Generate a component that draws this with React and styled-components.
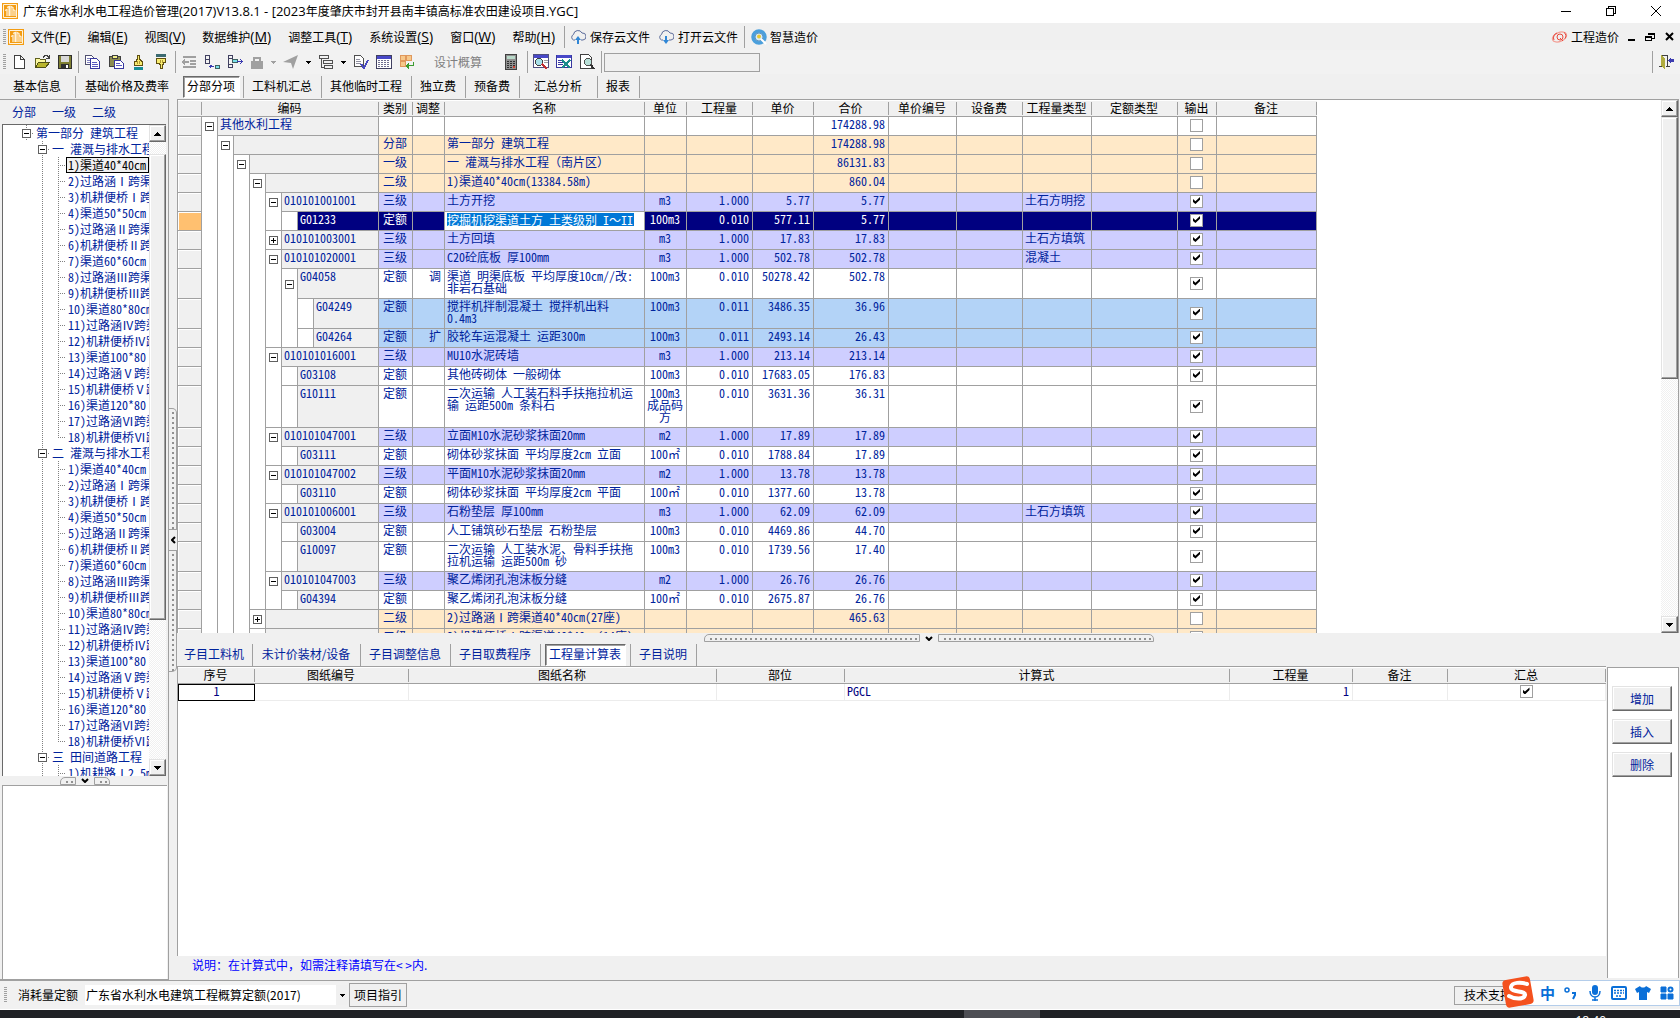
import React from "react";
import styled, { createGlobalStyle, css } from "styled-components";

const INK = "#00239c";
const LINE = "#a0a0a0";
const FACE = "#f0f0f0";
const UI = `"Noto Sans CJK SC", sans-serif`;
const MONO = `"Noto Sans Mono CJK SC", "Liberation Mono", "Noto Sans CJK SC", monospace`;

const Global = createGlobalStyle`
  * { box-sizing: border-box; }
  html, body { margin: 0; height: 100%; overflow: hidden; }
  body { font: 12px/16px ${UI}; color: #000; background: ${FACE}; }
  button, input, select { font: inherit; color: inherit; margin: 0; padding: 0; border-radius: 0; }
`;

const Window = styled.div`
  display: flex;
  flex-direction: column;
  height: 100vh;
  background: ${FACE};
  white-space: nowrap;
`;
const Latin = styled.span`
  font-family: "Open Sans", sans-serif;
  font-size: ${(p) => p.$size || 13}px;
  line-height: 12px;
`;
const Plain = styled.button`
  display: flex;
  align-items: center;
  gap: ${(p) => p.$gap || 0}px;
  flex: none;
  border: 0;
  background: none;
`;
const Spacer = styled.div`
  flex: 1;
`;

/* ---------- title bar ---------- */
const TitleBar = styled.header`
  display: flex;
  align-items: center;
  gap: 5px;
  height: 23px;
  flex: none;
  padding: 0 16px 2px 2px;
  background: #fff;
`;
const TitleText = styled.h1`
  margin: 0;
  font-size: 12px;
  font-weight: 400;
  line-height: 16px;
`;
const Captions = styled.div`
  display: flex;
  gap: 29px;
  margin-left: auto;
`;

/* ---------- menu and tool bars ---------- */
const MenuBar = styled.nav`
  display: flex;
  align-items: center;
  height: 27px;
  flex: none;
  padding: 0 6px 0 3px;
`;
const Menus = styled.div`
  display: flex;
  gap: 17px;
  padding: 0 9px 0 7px;
`;
const Grip = styled.div`
  width: 3px;
  height: 16px;
  margin-right: ${(p) => p.$after || 0}px;
  background: repeating-linear-gradient(#a0a0a0 0 1px, transparent 1px 2px);
`;
const Rule = styled.div`
  width: 1px;
  height: 22px;
  margin: 0 ${(p) => p.$right}px 0 ${(p) => p.$left}px;
  background: ${LINE};
`;
const ToolBar = styled.div`
  display: flex;
  align-items: center;
  height: 24px;
  flex: none;
  padding: 0 5px 0 3px;
  background: #f2f2f2;
`;
const Tools = styled.div`
  display: flex;
  align-items: center;
  gap: ${(p) => p.$gap}px;
  margin-left: ${(p) => p.$left || 0}px;
`;
const Mode = styled.span`
  margin: 0 23px 0 19px;
  color: #808080;
`;
const Search = styled.input`
  width: 156px;
  height: 19px;
  border: 1px solid ${LINE};
  background: ${FACE};
`;

/* ---------- tabs ---------- */
const TabBar = styled.div`
  display: flex;
  align-items: center;
  height: ${(p) => p.$height}px;
  flex: none;
  color: ${(p) => p.$color || "#000"};
`;
const TabSlot = styled.div`
  display: flex;
  justify-content: center;
  align-items: center;
  width: ${(p) => p.$width}px;
  height: 22px;
  flex: none;
  border-right: 1px solid ${(p) => (p.$bare ? "transparent" : LINE)};
`;
const Tab = styled.button`
  height: 22px;
  padding: 0 4px 2px 3px;
  border: 1px solid transparent;
  background: none;
  ${(p) =>
    p.$active &&
    css`
      border-color: #696969 #fff #fff #696969;
      box-shadow: inset 1px 1px 0 ${LINE};
      background: #fff;
    `}
`;

/* ---------- body ---------- */
const Body = styled.main`
  display: flex;
  flex: 1;
  min-height: 0;
`;
const Side = styled.aside`
  display: flex;
  flex-direction: column;
  flex: none;
  width: 169px;
  padding-left: 2px;
  border: solid ${LINE};
  border-width: 1px 1px 1px 0;
`;
const Levels = styled.div`
  display: flex;
  align-items: center;
  gap: 16px;
  height: 24px;
  flex: none;
  padding-left: 10px;
  color: ${INK};
`;
const TreeBox = styled.div`
  display: flex;
  flex: 653 1 0;
  min-height: 0;
  margin-right: 2px;
  border: solid #696969;
  border-width: 1px 0 0 1px;
  background: #fff;
`;
const Tree = styled.ul`
  flex: 1;
  min-width: 0;
  margin: 0;
  padding: 0 0 0 15px;
  overflow: hidden;
  list-style: none;
  font-family: ${MONO};
  color: ${INK};
`;
const TreeRow = styled.li`
  display: flex;
  height: 16px;
`;
const Guide = styled.span`
  display: flex;
  justify-content: center;
  align-items: center;
  width: 16px;
  flex: none;
  background-repeat: no-repeat;
  background-image: repeating-linear-gradient(${(p) => (p.$down ? "#808080" : "transparent")} 0 1px, transparent 1px 2px),
    repeating-linear-gradient(90deg, ${(p) => (p.$across ? "#808080" : "transparent")} 0 1px, transparent 1px 2px);
  background-size: 1px ${(p) => (p.$end ? "8px" : "100%")}, 9px 1px;
  background-position: 8px 0, 8px 8px;
`;
const TreeLabel = styled.span`
  padding-left: 2px;
  line-height: 15px;
  height: 16px;
  ${(p) =>
    p.$active &&
    css`
      flex: 1;
      border: 1px solid #000;
      padding-left: 1px;
      line-height: 13px;
      background: ${FACE};
      color: #000;
    `}
`;
const Notes = styled.div`
  flex: 193 1 0;
  margin-right: 1px;
  border: solid ${LINE};
  border-width: 1px 0 0 1px;
  background: #fff;
`;
const Toggle = styled.button`
  display: flex;
  align-items: center;
  justify-content: center;
  flex: none;
  width: 9px;
  height: 9px;
  border: 1px solid #606060;
  background: #fff;
`;

/* ---------- scroll bar ---------- */
const Scroll = styled.div`
  display: flex;
  flex-direction: column;
  flex: none;
  width: 17px;
  background: repeating-conic-gradient(#f0f0f0 0 25%, #fff 0 50%) 0 0 / 2px 2px;
`;
const Bevel = styled.button`
  display: flex;
  align-items: center;
  justify-content: center;
  border: 1px solid;
  border-color: #e3e3e3 #696969 #696969 #e3e3e3;
  box-shadow: inset -1px -1px 0 ${LINE}, inset 1px 1px 0 #fff;
  background: ${FACE};
`;
const Arrow = styled(Bevel)`
  height: 17px;
  flex: none;
`;
const Thumb = styled(Bevel)`
  flex: ${(p) => p.$size} 1 0;
`;
const Track = styled.div`
  flex: ${(p) => p.$size} 1 0;
`;

/* ---------- splitters ---------- */
const VSplit = styled.div`
  display: flex;
  flex-direction: column;
  justify-content: center;
  flex: none;
  width: 8px;
`;
const HSplit = styled.div`
  display: flex;
  justify-content: center;
  align-items: center;
  flex: none;
  height: ${(p) => p.$height}px;
`;
const GripV = styled.div`
  height: 122px;
  border: 1px solid ${LINE};
  border-left: 0;
  border-radius: ${(p) => (p.$first ? "0 5px 0 0" : "0 0 5px 0")};
  background: repeating-linear-gradient(transparent 0 3px, #909090 3px 5px) 3px 0 / 2px 100% no-repeat;
`;
const GripH = styled.div`
  width: ${(p) => p.$width}px;
  height: 8px;
  border: 1px solid ${LINE};
  border-radius: ${(p) => (p.$first ? "5px 0 0 0" : "0 5px 0 0")};
  background: repeating-linear-gradient(90deg, transparent 0 3px, #909090 3px 5px) 2px 3px / calc(100% - 4px) 2px no-repeat;
`;
const Fold = styled(Plain)`
  justify-content: center;
  width: ${(p) => p.$w}px;
  height: ${(p) => p.$h}px;
`;

/* ---------- tables ---------- */
const Work = styled.section`
  display: flex;
  flex-direction: column;
  flex: 1;
  min-width: 0;
`;
const Pane = styled.div`
  display: flex;
  flex: ${(p) => p.$size} 1 0;
  min-height: 0;
  border: solid ${LINE};
  border-width: 1px 0 0 1px;
  background: #fff;
`;
const GridPane = styled(Pane)`
  border-right-width: 1px;
  margin-right: 1px;
`;
const Sheet = styled.div`
  flex: 1;
  overflow: hidden;
`;
const Table = styled.table`
  width: ${(p) => p.$width};
  table-layout: fixed;
  border-spacing: 0;
  font-family: ${MONO};
  line-height: 12px;
  color: ${INK};
`;
const Th = styled.th`
  height: 17px;
  padding: 0 2px 0 0;
  border-bottom: 1px solid ${LINE};
  background: linear-gradient(${LINE}, ${LINE}) 100% 50% / 1px 13px no-repeat, ${FACE};
  box-shadow: inset 0 1px 0 #fff;
  font-weight: 400;
  font-family: ${UI};
  color: #000;
`;
const Td = styled.td`
  padding: 1px 3px 1px 2px;
  border: solid ${LINE};
  border-width: 0 1px 1px 0;
  vertical-align: top;
  text-align: ${(p) => p.$align || "left"};
  white-space: normal;
`;
const TickCell = styled(Td)`
  padding: 0 1px 1px 0;
  border-color: ${(p) => (p.$faint ? "#ececec" : LINE)};
  vertical-align: middle;
`;
const GutterCell = styled(Td)`
  background: ${(p) => (p.$on ? "#ffc070" : FACE)};
  box-shadow: inset 1px 1px 0 #fff;
`;
const CodeCell = styled(Td)`
  padding: 0;
  border-bottom: 0;
`;
const tints = { top: "#fff", part: "#ffe9c8", item: "#ceceff", norm: "#fff", sub: "#b3d3f7", pick: "#000080" };
const Tr = styled.tr`
  height: ${(p) => p.$height}px;
  background: ${(p) => tints[p.$kind]};
  color: ${(p) => (p.$kind === "pick" ? "#fff" : "inherit")};
`;
const CodeLine = styled.div`
  display: flex;
  height: ${(p) => p.$height}px;
`;
const Step = styled.div`
  display: flex;
  align-items: center;
  justify-content: center;
  flex: none;
  width: 16px;
  border-right: 1px solid ${LINE};
  border-bottom: ${(p) => (p.$closed ? `1px solid ${LINE}` : "0")};
  background: #fff;
  color: #000;
`;
const Code = styled.div`
  flex: 1;
  padding: 1px 0 0 2px;
  border-bottom: 1px solid ${LINE};
  background: ${(p) => (p.$pick ? "#000080" : FACE)};
`;
const Check = styled.input.attrs({ type: "checkbox" })`
  appearance: none;
  display: block;
  width: 13px;
  height: 13px;
  margin: 0 auto;
  border: 1px solid ${LINE};
  background: #fff;
  &:checked::before {
    content: "";
    display: block;
    width: 7px;
    height: 7px;
    margin: 1px 2px;
    background: #000;
    clip-path: polygon(0 30%, 35% 60%, 100% 0, 100% 38%, 35% 100%, 0 70%);
  }
`;
const NameInput = styled.input`
  display: block;
  width: 187px;
  height: 13px;
  border: 0;
  background: #0078d7;
  color: #fff;
  line-height: 12px;
`;
const NameCell = styled(Td)`
  background: ${(p) => (p.$edit ? "#fff" : "transparent")};
`;

const Lower = styled.div`
  display: flex;
  flex: 314 1 0;
  min-height: 0;
`;
const Calc = styled.div`
  display: flex;
  flex-direction: column;
  flex: 1;
  min-width: 0;
`;
const CalcTd = styled(Td)`
  height: 17px;
  border-color: #ececec;
  color: #000080;
`;
const CalcIndex = styled(CalcTd)`
  padding: 0;
  border: 1px solid #000;
`;
const Hint = styled.p`
  height: 24px;
  margin: 0;
  padding: 1px 15px;
  color: #0000ff;
`;
const Actions = styled.div`
  display: flex;
  flex-direction: column;
  gap: 8px;
  flex: none;
  width: 72px;
  margin: 1px 1px 2px 1px;
  padding: 18px 6px 0 4px;
  border: solid ${LINE};
  border-width: 1px 1px 0 1px;
  background: #fff;
`;
const Action = styled(Bevel)`
  height: 25px;
  color: ${INK};
`;

/* ---------- status bar ---------- */
const Status = styled.footer`
  display: flex;
  align-items: center;
  position: relative;
  height: 30px;
  flex: none;
  padding: 0 0 0 4px;
  border-top: 1px solid ${LINE};
  border-bottom: 1px solid #fff;
  background: #f1f1f1;
`;
const Combo = styled.div`
  display: flex;
  align-items: center;
  width: 262px;
  height: 20px;
  margin: 0 2px 0 7px;
  padding-right: 2px;
  background: linear-gradient(${FACE}, ${FACE}) 100% 0 / 11px 100% no-repeat, #fff;
`;
const Select = styled.select`
  appearance: none;
  flex: 1;
  border: 0;
  padding-left: 1px;
  background: none;
  font-family: "Noto Sans CJK SC", sans-serif;
`;
const FlatButton = styled.button`
  height: ${(p) => p.$height}px;
  padding: 0 ${(p) => p.$pad}px;
  border: 1px solid ${LINE};
  background: ${FACE};
`;
const SupportButton = styled(FlatButton)`
  margin-right: 158px;
`;
const InputBar = styled.div`
  position: absolute;
  right: 0;
  bottom: 3px;
  display: flex;
  align-items: center;
  gap: 8px;
  width: 173px;
  height: 26px;
  padding: 0 4px 0 32px;
  border: 1px solid #b4cdea;
  background: #fff;
  color: #0a6fd8;
`;
const Badge = styled.span`
  position: absolute;
  left: -6px;
  top: -5px;
`;
const InputMode = styled.span`
  font-size: 15px;
  font-weight: 700;
`;
const TaskBar = styled.div`
  display: flex;
  justify-content: space-between;
  height: 8px;
  flex: none;
  padding: 0 4px 0 964px;
  overflow: hidden;
  background: #202226;
  color: #fff;
`;
const Running = styled.div`
  flex: none;
  width: 76px;
  background: #4d4e54;
`;
const Clock = styled.time`
  padding: 3px 70px 0 0;
  font: 12px/16px "Open Sans", sans-serif;
`;

/* ---------- drawings ---------- */
const Drawing = styled.svg`
  display: block;
  flex: none;
`;
const Svg = ({ w = 16, h = 16, box, smooth, children }) => (
  <Drawing
    width={w}
    height={h}
    viewBox={box || `0 0 ${w} ${h}`}
    fill="none"
    stroke="none"
    shapeRendering={smooth ? "auto" : "crispEdges"}
    aria-hidden="true"
  >
    {children}
  </Drawing>
);
const Logo = () => (
  <Svg smooth>
    <rect width="16" height="16" fill="#f39c12" />
    <path d="M1.500 1.500h13v13h-13z" stroke="#fff3dc" />
    <path d="M3 7.500l2-1V13M5 4.500l2-1V13M9 13V3.500l2 1V13M11 6.500l2 1V13M7.500 3v10" stroke="#fff3dc" strokeWidth="1.200" />
  </Svg>
);
const Caret = ({ color = "#000", up }) => (
  <Svg w={7} h={4}>
    <path d={up ? "M0 4h7L3.500 0z" : "M0 0h7L3.500 4z"} fill={color} />
  </Svg>
);
const SmallCaret = ({ color = "#000" }) => (
  <Svg w={5} h={3}>
    <path d="M0 0h5L2.500 3z" fill={color} />
  </Svg>
);
const Chevron = ({ left }) =>
  left ? (
    <Svg w={5} h={8} smooth>
      <path d="M4 1L1 4l3 3" stroke="#000" strokeWidth="2" />
    </Svg>
  ) : (
    <Svg w={8} h={5} smooth>
      <path d="M1 1l3 3 3-3" stroke="#000" strokeWidth="2" />
    </Svg>
  );
const Sign = ({ plus }) => (
  <Svg w={5} h={5}>
    <path d={plus ? "M0 2h5v1H0zM2 0h1v5H2z" : "M0 2h5v1H0z"} fill="#000" />
  </Svg>
);
const Cloud = ({ down }) => (
  <Svg smooth>
    <path d="M5 11H3.500a3 3 0 010-5.500 4.500 4.500 0 018.500-1.500 3.500 3.500 0 011 7H11" stroke="#5b6b9a" />
    <path d={down ? "M7 7h2v4h2l-3 4-3-4h2z" : "M7 15h2v-4h2L8 7l-3 4h2z"} fill="#2f86d6" />
  </Svg>
);
const Wise = () => (
  <Svg smooth>
    <circle cx="8" cy="8" r="6" stroke="#4a9fdc" strokeWidth="3.500" />
    <circle cx="8" cy="8" r="4" fill="#d8ecf8" stroke="#2c6ea8" strokeWidth=".700" />
    <circle cx="8" cy="7.500" r="2" fill="#e8c832" />
    <path d="M10 10l5 5" stroke="#fff" strokeWidth="2" />
  </Svg>
);
const Swirl = () => (
  <Svg w={17} smooth>
    <ellipse cx="8.500" cy="8" rx="7.500" ry="4.500" transform="rotate(-22 8.500 8)" stroke="#f2a097" strokeWidth="1.200" />
    <circle cx="9" cy="8" r="3" stroke="#e8483c" />
    <path d="M9 9l3 3M6 4a5 5 0 00-3 7M13 3.500a4 4 0 011 6" stroke="#e8483c" />
  </Svg>
);

const I = {
  fresh: (
    <Svg>
      <path d="M3.500 1.500h6l4 4v9h-10zM9.500 1.500v4h4" fill="#fff" stroke="#404040" />
    </Svg>
  ),
  open: (
    <Svg>
      <path d="M1.500 13.500v-9h4l1 1h5v3" fill="#fbf8a0" stroke="#606020" />
      <path d="M1.500 13.500l3-5h11l-4 5z" fill="#b9b52c" stroke="#505018" />
      <path d="M9 3.500l2-2h2l2 2M15 1v3h-3" stroke="#404040" />
    </Svg>
  ),
  save: (
    <Svg>
      <path d="M1.500 1.500h13v13h-13z" fill="#808032" stroke="#303030" />
      <path d="M4 2h8v6H4z" fill="#d8d8d8" />
      <path d="M4 10h8v4H4z" fill="#303030" />
      <path d="M9 11h2v3H9z" fill="#fff" />
    </Svg>
  ),
  copy: (
    <Svg>
      <path d="M1.500 1.500h6l2 2v7h-8z" fill="#fff" stroke="#505070" />
      <path d="M3 4h4M3 6h4M3 8h4" stroke="#8080c0" />
      <path d="M6.500 4.500h6l3 3v7h-9z" fill="#fff" stroke="#3838a0" />
      <path d="M8 8.500h5M8 10.500h6M8 12.500h6" stroke="#5858c0" />
    </Svg>
  ),
  paste: (
    <Svg>
      <path d="M1.500 2.500h11v10h-11z" fill="#8c8c50" stroke="#404040" />
      <path d="M4.500 1.500h5v3h-5z" fill="#f4f08c" stroke="#404040" />
      <path d="M6.500 6.500h6l3 3v5h-9z" fill="#fff" stroke="#3838a0" />
      <path d="M8 9.500h4M8 11.500h6" stroke="#5858c0" />
    </Svg>
  ),
  handUp: (
    <Svg w={12} box="2 0 12 16">
      <path d="M7.500 1.500h2v4h1v1h1v1h1v4h-8v-4h2v-2h1z" fill="#f8ec70" stroke="#605010" />
      <path d="M7.500 7v3M9.500 7v3" stroke="#b09830" />
      <path d="M4 13h9v3H4z" fill="#158c94" />
    </Svg>
  ),
  handDown: (
    <Svg w={12} box="2 0 12 16">
      <path d="M3 0h10v3H3z" fill="#3c6a70" />
      <path d="M3.500 4.500h9v4h-2v2h-1v4h-2v-4h-1v-1h-3z" fill="#f8ec70" stroke="#605010" />
      <path d="M7.500 6v3M9.500 6v3" stroke="#b09830" />
    </Svg>
  ),
  outdent: (
    <Svg>
      <path d="M2 2h13v2H2zM9 6h6v2H9zM9 9h6v2H9zM2 12h13v2H2zM0 8l4-3v2h4v2H4v2z" fill="#a0a0a0" />
    </Svg>
  ),
  addChild: (
    <Svg>
      <path d="M1.500 1.500h4v4h-4zM1.500 5.500h4v4h-4zM1.500 9.500h4" stroke="#404060" />
      <path d="M6 12.500h4M7.500 11l-2 1.500 2 2" stroke="#3838b0" />
      <path d="M11.500 11.500h4v3h-4z" fill="#78e0e8" stroke="#406060" />
    </Svg>
  ),
  addSame: (
    <Svg>
      <path d="M1.500 1.500h4v3h-4zM1.500 10.500h4v3h-4zM1.500 4v7" stroke="#404060" />
      <path d="M5.500 5.500h5v3h-5z" fill="#78e0e8" stroke="#406060" />
      <path d="M10 7.500h5M13 5l2 2.500-2 2.500" stroke="#3838b0" />
    </Svg>
  ),
  lock: (
    <Svg w={14}>
      <path d="M1 7h12v8H1z" fill="#a0a0a0" />
      <path d="M4 7V3.500h6V7" stroke="#a0a0a0" strokeWidth="2" />
    </Svg>
  ),
  send: (
    <Svg smooth>
      <path d="M0 8L15 1l-5 14-2-6z" fill="#a0a0a0" />
    </Svg>
  ),
  outline: (
    <Svg>
      <path d="M1.500 1.500h9v3h-9zM3.500 5v8h3M5.500 6.500h9v3h-9zM6.500 11.500h8v3h-8z" stroke="#505050" />
    </Svg>
  ),
  verify: (
    <Svg>
      <path d="M1.500 1.500h6l3 3v8h-9z" fill="#fff" stroke="#505050" />
      <path d="M3 5h4M3 7h5M3 9h5" stroke="#9090a0" />
      <path d="M8 10l3 4 4-8" stroke="#4848c0" strokeWidth="2" />
    </Svg>
  ),
  sheet: (
    <Svg>
      <path d="M.500 1.500h15v13H.500z" fill="#fff" stroke="#404060" />
      <path d="M1 2h14v3H1z" fill="#4848c8" />
      <path d="M2 6.500h12M2 8.500h12M2 10.500h12M2 12.500h12" stroke="#707090" strokeDasharray="2 1" />
    </Svg>
  ),
  blocks: (
    <Svg>
      <path d="M1 1h5v5H1zM7 1h5v5H7zM1 7h5v5H1z" fill="#f7c88a" stroke="#e0985c" />
      <path d="M6 12l4-3v2h4V8h1v4h-5v3z" fill="#3c9c30" />
    </Svg>
  ),
  calc: (
    <Svg w={12}>
      <path d="M.500 .500h11v15H.500z" fill="#909090" stroke="#404040" />
      <path d="M2 2h8v3H2z" fill="#b8d8c8" />
      <path d="M2 7.500h8M2 9.500h8M2 11.500h8M2 13.500h8" stroke="#303030" strokeDasharray="2 1" />
      <path d="M8 12h2v2H8z" fill="#d04030" />
    </Svg>
  ),
  find: (
    <Svg>
      <path d="M.500 .500h15v13H.500z" fill="#fff" stroke="#505080" />
      <path d="M1 1h14v3H1z" fill="#4848c8" />
      <path d="M11 6.500h4M11 8.500h4" stroke="#a0a0a0" />
      <circle cx="6" cy="8" r="3.500" fill="#a8e0e8" stroke="#404040" />
      <path d="M9 10l5 5" stroke="#c03030" strokeWidth="2" />
    </Svg>
  ),
  excel: (
    <Svg>
      <path d="M.500 1.500h15v12H.500z" fill="#fff" stroke="#3838a0" />
      <path d="M1 1h14v3H1z" fill="#4848c8" />
      <path d="M2 6.500h5M2 8.500h5M2 10.500h5" stroke="#3838a0" />
      <path d="M6 6l8 8M14 6l-8 8" stroke="#1a8c8c" strokeWidth="2" />
    </Svg>
  ),
  preview: (
    <Svg>
      <path d="M1.500 .500h8l3 3v11h-11z" fill="#fff" stroke="#404040" />
      <circle cx="9" cy="8" r="3.500" fill="#b8e0d8" stroke="#505050" />
      <path d="M12 11l3 4" stroke="#303030" strokeWidth="2" />
    </Svg>
  ),
  exit: (
    <Svg>
      <path d="M0 12.500h3M7 12.500h4M2 1.500h6.500v10" stroke="#404040" />
      <path d="M2 1l4 3v11l-4-3z" fill="#b0ac40" />
      <path d="M9 6l3-3v2h3v3h-3v2z" fill="#3c3cb0" />
    </Svg>
  ),
};
const tool = (id, label) => (
  <Plain key={id} aria-label={label}>
    {I[id]}
  </Plain>
);

/* ---------- data ---------- */
const menus = [
  ["文件", "F"], ["编辑", "E"], ["视图", "V"], ["数据维护", "M"],
  ["调整工具", "T"], ["系统设置", "S"], ["窗口", "W"], ["帮助", "H"],
];
const mainTabs = [
  ["基本信息", 76], ["基础价格及费率", 104, 1], ["分部分项", 64, 0, 1], ["工料机汇总", 78], ["其他临时工程", 90],
  ["独立费", 54], ["预备费", 54], ["汇总分析", 78], ["报表", 42],
];
const subTabs = [
  ["子目工料机", 76], ["未计价装材/设备", 108], ["子目调整信息", 90], ["子目取费程序", 90], ["工程量计算表", 90, 0, 1], ["子目说明", 66],
];
const leaves = [
  "1)渠道40*40cm", "2)过路涵Ⅰ跨渠", "3)机耕便桥Ⅰ跨", "4)渠道50*50cm", "5)过路涵Ⅱ跨渠", "6)机耕便桥Ⅱ跨",
  "7)渠道60*60cm", "8)过路涵Ⅲ跨渠", "9)机耕便桥Ⅲ跨", "10)渠道80*80cm", "11)过路涵Ⅳ跨渠", "12)机耕便桥Ⅳ跨",
  "13)渠道100*80", "14)过路涵Ⅴ跨渠", "15)机耕便桥Ⅴ跨", "16)渠道120*80", "17)过路涵Ⅵ跨渠", "18)机耕便桥Ⅵ跨",
];
const tree = [
  { d: 0, t: "第一部分 建筑工程" },
  { d: 1, t: "一 灌溉与排水工程" },
  ...leaves.map((t, i) => ({ d: 2, t, on: i === 0, end: i === 17 })),
  { d: 1, t: "二 灌溉与排水工程" },
  ...leaves.map((t, i) => ({ d: 2, t, end: i === 17 })),
  { d: 1, t: "三 田间道路工程" },
  { d: 2, t: "1)机耕路Ⅰ2.5m" },
];

const columns = [
  ["", 24], ["编码", 177], ["类别", 34], ["调整", 32], ["名称", 200], ["单位", 42], ["工程量", 66], ["单价", 61],
  ["合价", 75], ["单价编号", 68], ["设备费", 66], ["工程量类型", 69], ["定额类型", 86], ["输出", 39], ["备注", 100],
];
// kind, level, sign, code, class, adjust, name, unit, quantity, price, total, type, ticked, lines
const rows = [
  ["top", 0, "-", "其他水利工程", "", "", "", "", "", "", "174288.98", "", 0, 1],
  ["part", 1, "-", "", "分部", "", "第一部分 建筑工程", "", "", "", "174288.98", "", 0, 1],
  ["part", 2, "-", "", "一级", "", "一 灌溉与排水工程（南片区）", "", "", "", "86131.83", "", 0, 1],
  ["part", 3, "-", "", "二级", "", "1)渠道40*40cm(13384.58m)", "", "", "", "860.04", "", 0, 1],
  ["item", 4, "-", "010101001001", "三级", "", "土方开挖", "m3", "1.000", "5.77", "5.77", "土石方明挖", 1, 1],
  ["pick", 5, "", "G01233", "定额", "", "挖掘机挖渠道土方 土类级别 I～II", "100m3", "0.010", "577.11", "5.77", "", 1, 1],
  ["item", 4, "+", "010101003001", "三级", "", "土方回填", "m3", "1.000", "17.83", "17.83", "土石方填筑", 1, 1],
  ["item", 4, "-", "010101020001", "三级", "", "C20砼底板 厚100mm", "m3", "1.000", "502.78", "502.78", "混凝土", 1, 1],
  ["norm", 5, "-", "G04058", "定额", "调", "渠道 明渠底板 平均厚度10cm//改:非岩石基础", "100m3", "0.010", "50278.42", "502.78", "", 1, 2],
  ["sub", 6, "", "G04249", "定额", "", "搅拌机拌制混凝土 搅拌机出料 0.4m3", "100m3", "0.011", "3486.35", "36.96", "", 1, 2],
  ["sub", 6, "", "G04264", "定额", "扩", "胶轮车运混凝土 运距300m", "100m3", "0.011", "2493.14", "26.43", "", 1, 1],
  ["item", 4, "-", "010101016001", "三级", "", "MU10水泥砖墙", "m3", "1.000", "213.14", "213.14", "", 1, 1],
  ["norm", 5, "", "G03108", "定额", "", "其他砖砌体 一般砌体", "100m3", "0.010", "17683.05", "176.83", "", 1, 1],
  ["norm", 5, "", "G10111", "定额", "", "二次运输 人工装石料手扶拖拉机运输 运距500m 条料石", "100m3 成品码方", "0.010", "3631.36", "36.31", "", 1, 3],
  ["item", 4, "-", "010101047001", "三级", "", "立面M10水泥砂浆抹面20mm", "m2", "1.000", "17.89", "17.89", "", 1, 1],
  ["norm", 5, "", "G03111", "定额", "", "砌体砂浆抹面 平均厚度2cm 立面", "100㎡", "0.010", "1788.84", "17.89", "", 1, 1],
  ["item", 4, "-", "010101047002", "三级", "", "平面M10水泥砂浆抹面20mm", "m2", "1.000", "13.78", "13.78", "", 1, 1],
  ["norm", 5, "", "G03110", "定额", "", "砌体砂浆抹面 平均厚度2cm 平面", "100㎡", "0.010", "1377.60", "13.78", "", 1, 1],
  ["item", 4, "-", "010101006001", "三级", "", "石粉垫层 厚100mm", "m3", "1.000", "62.09", "62.09", "土石方填筑", 1, 1],
  ["norm", 5, "", "G03004", "定额", "", "人工铺筑砂石垫层 石粉垫层", "100m3", "0.010", "4469.86", "44.70", "", 1, 1],
  ["norm", 5, "", "G10097", "定额", "", "二次运输 人工装水泥、骨料手扶拖拉机运输 运距500m 砂", "100m3", "0.010", "1739.56", "17.40", "", 1, 2],
  ["item", 4, "-", "010101047003", "三级", "", "聚乙烯闭孔泡沫板分缝", "m2", "1.000", "26.76", "26.76", "", 1, 1],
  ["norm", 5, "", "G04394", "定额", "", "聚乙烯闭孔泡沫板分缝", "100㎡", "0.010", "2675.87", "26.76", "", 1, 1],
  ["part", 3, "+", "", "二级", "", "2)过路涵Ⅰ跨渠道40*40cm(27座)", "", "", "", "465.63", "", 0, 1],
  ["part", 3, "+", "", "二级", "", "3)机耕便桥Ⅰ跨渠道40*40cm(14座)", "", "", "", "", "", 0, 1],
];
const heights = { 1: 19, 2: 30, 3: 42 };
const calcColumns = [
  ["序号", 77], ["图纸编号", 154], ["图纸名称", 308], ["部位", 128], ["计算式"], ["工程量", 123], ["备注", 95], ["汇总", 158],
];

const ScrollBar = ({ before, size, after }) => (
  <Scroll>
    <Arrow aria-label="向上">
      <Caret up />
    </Arrow>
    {before > 0 && <Track $size={before} />}
    <Thumb $size={size} aria-label="滚动" />
    <Track $size={after} />
    <Arrow aria-label="向下">
      <Caret />
    </Arrow>
  </Scroll>
);

const Tabs = ({ items, height, color }) => (
  <TabBar role="tablist" $height={height} $color={color}>
    {items.map(([label, width, bare, active]) => (
      <TabSlot key={label} $width={width} $bare={bare}>
        <Tab role="tab" aria-selected={!!active} $active={active}>
          {label}
        </Tab>
      </TabSlot>
    ))}
  </TabBar>
);

const Row = ({ row, next }) => {
  const [kind, level, sign, code, cls, adj, name, unit, qty, price, total, type, ticked, lines] = row;
  const h = heights[lines];
  const nextLevel = next ? next[1] : level;
  return (
    <Tr $kind={kind} $height={h}>
      <GutterCell $on={kind === "pick"} />
      <CodeCell>
        <CodeLine $height={h}>
          {Array.from({ length: level + 1 }, (_, i) => (
            <Step key={i} $closed={i >= nextLevel}>
              {i === level && sign && (
                <Toggle aria-label="展开或折叠">
                  <Sign plus={sign === "+"} />
                </Toggle>
              )}
            </Step>
          ))}
          <Code $pick={kind === "pick"}>{code}</Code>
        </CodeLine>
      </CodeCell>
      <Td $align="center">{cls}</Td>
      <Td $align="right">{adj}</Td>
      <NameCell $edit={kind === "pick"}>
        {kind === "pick" ? <NameInput aria-label="名称" defaultValue={name} /> : name}
      </NameCell>
      <Td $align="center">{unit}</Td>
      <Td $align="right">{qty}</Td>
      <Td $align="right">{price}</Td>
      <Td $align="right">{total}</Td>
      <Td />
      <Td />
      <Td>{type}</Td>
      <Td />
      <TickCell>
        <Check aria-label="输出" defaultChecked={!!ticked} />
      </TickCell>
      <Td />
    </Tr>
  );
};

export default function App() {
  return (
    <Window>
      <Global />
      <TitleBar>
        <Logo />
        <TitleText>
          广东省水利水电工程造价管理<Latin>(2017)V13.8.1 - [2023</Latin>年度肇庆市封开县南丰镇高标准农田建设项目
          <Latin>.YGC]</Latin>
        </TitleText>
        <Captions>
          <Plain aria-label="最小化">
            <Svg>
              <path d="M3 8h10v1H3z" fill="#000" />
            </Svg>
          </Plain>
          <Plain aria-label="还原">
            <Svg>
              <path d="M3.500 5.500h7v7h-7zM5.500 5V3.500h7v7H11" stroke="#000" />
            </Svg>
          </Plain>
          <Plain aria-label="关闭">
            <Svg smooth>
              <path d="M3 3l10 10M13 3L3 13" stroke="#000" />
            </Svg>
          </Plain>
        </Captions>
      </TitleBar>

      <MenuBar>
        <Grip $after={2} />
        <Logo />
        <Menus>
          {menus.map(([t, k]) => (
            <Plain key={k}>
              {t}
              <Latin $size={14}>
                (<u>{k}</u>)
              </Latin>
            </Plain>
          ))}
        </Menus>
        <Rule $left={0} $right={5} />
        <Tools $gap={8}>
          <Plain $gap={4}>
            <Cloud />
            保存云文件
          </Plain>
          <Plain $gap={4}>
            <Cloud down />
            打开云文件
          </Plain>
        </Tools>
        <Rule $left={6} $right={6} />
        <Plain $gap={3}>
          <Wise />
          智慧造价
        </Plain>
        <Spacer />
        <Plain $gap={3}>
          <Swirl />
          工程造价
        </Plain>
        <Tools $gap={10}>
          <Plain aria-label="最小化窗口">
            <Svg w={16} h={10}>
              <path d="M9 7h7v2H9z" fill="#000" />
            </Svg>
          </Plain>
          <Plain aria-label="还原窗口">
            <Svg w={10} h={10}>
              <path d="M.500 4.500h6v4h-6zM3 1.500h6.500v5H7" stroke="#000" />
              <path d="M0 4h7v2H0zM3 1h7v2H3z" fill="#000" />
            </Svg>
          </Plain>
          <Plain aria-label="关闭窗口">
            <Svg w={9} h={9} smooth>
              <path d="M1 1l7 7M8 1L1 8" stroke="#000" strokeWidth="2" />
            </Svg>
          </Plain>
        </Tools>
      </MenuBar>

      <ToolBar>
        <Grip $after={5} />
        <Tools $gap={7}>
          {tool("fresh", "新建")}
          {tool("open", "打开")}
          {tool("save", "保存")}
        </Tools>
        <Rule $left={5} $right={5} />
        <Tools $gap={8}>
          {tool("copy", "复制")}
          {tool("paste", "粘贴")}
          {tool("handUp", "上移")}
        </Tools>
        <Tools $left={11}>{tool("handDown", "下移")}</Tools>
        <Rule $left={8} $right={5} />
        <Tools $gap={7}>
          {tool("outdent", "升级")}
          {tool("addChild", "增加子项")}
          {tool("addSame", "增加同级")}
          {tool("lock", "锁定")}
          <SmallCaret color="#a0a0a0" />
          {tool("send", "发送")}
          <SmallCaret />
          {tool("outline", "层级")}
          <SmallCaret />
          {tool("verify", "检查")}
          {tool("sheet", "表格")}
          {tool("blocks", "组合")}
        </Tools>
        <Mode>设计概算</Mode>
        {tool("calc", "计算器")}
        <Rule $left={10} $right={5} />
        <Tools $gap={7}>
          {tool("find", "查找")}
          {tool("excel", "导出")}
          {tool("preview", "预览")}
        </Tools>
        <Rule $left={6} $right={2} />
        <Search aria-label="搜索" />
        <Spacer />
        <Rule $left={0} $right={6} />
        {tool("exit", "退出")}
      </ToolBar>

      <Tabs items={mainTabs} height={25} />

      <Body>
        <Side>
          <Levels>
            <Plain>分部</Plain>
            <Plain>一级</Plain>
            <Plain>二级</Plain>
          </Levels>
          <TreeBox>
            <Tree>
              {tree.map((n, i) => (
                <TreeRow key={i}>
                  {n.d > 0 && <Guide />}
                  {n.d === 2 && <Guide $down />}
                  {n.d === 2 ? (
                    <Guide $down $across $end={n.end} />
                  ) : (
                    <Guide $down $across>
                      <Toggle aria-label="展开或折叠">
                        <Sign />
                      </Toggle>
                    </Guide>
                  )}
                  <TreeLabel $active={n.on}>{n.t}</TreeLabel>
                </TreeRow>
              ))}
            </Tree>
            <ScrollBar before={12} size={464} after={140} />
          </TreeBox>
          <HSplit $height={9}>
            <GripH $first $width={16} />
            <Fold $w={18} $h={8} aria-label="折叠">
              <Chevron />
            </Fold>
            <GripH $width={16} />
          </HSplit>
          <Notes />
        </Side>
        <VSplit>
          <GripV $first />
          <Fold $w={8} $h={20} aria-label="折叠侧栏">
            <Chevron left />
          </Fold>
          <GripV />
        </VSplit>

        <Work>
          <GridPane $size={534}>
            <Sheet>
              <Table $width="1139px">
                <colgroup>
                  {columns.map(([t, w], i) => (
                    <col key={i} width={w} />
                  ))}
                </colgroup>
                <thead>
                  <tr>
                    {columns.map(([t], i) => (
                      <Th key={i}>{t}</Th>
                    ))}
                  </tr>
                </thead>
                <tbody>
                  {rows.map((r, i) => (
                    <Row key={i} row={r} next={rows[i + 1]} />
                  ))}
                </tbody>
              </Table>
            </Sheet>
            <ScrollBar before={0} size={261} after={238} />
          </GridPane>
          <HSplit $height={10}>
            <GripH $first $width={216} />
            <Fold $w={18} $h={8} aria-label="折叠明细">
              <Chevron />
            </Fold>
            <GripH $width={216} />
          </HSplit>
          <Tabs items={subTabs} height={23} color={INK} />
          <Lower>
            <Calc>
              <Pane $size={290}>
                <Sheet>
                  <Table $width="100%">
                    <colgroup>
                      {calcColumns.map(([t, w]) => (
                        <col key={t} width={w} />
                      ))}
                    </colgroup>
                    <thead>
                      <tr>
                        {calcColumns.map(([t]) => (
                          <Th key={t}>{t}</Th>
                        ))}
                      </tr>
                    </thead>
                    <tbody>
                      <tr>
                        <CalcIndex $align="center">1</CalcIndex>
                        <CalcTd />
                        <CalcTd />
                        <CalcTd />
                        <CalcTd>PGCL</CalcTd>
                        <CalcTd $align="right">1</CalcTd>
                        <CalcTd />
                        <TickCell $faint>
                          <Check aria-label="汇总" defaultChecked />
                        </TickCell>
                      </tr>
                    </tbody>
                  </Table>
                </Sheet>
              </Pane>
              <Hint>说明：在计算式中，如需注释请填写在&lt; &gt;内.</Hint>
            </Calc>
            <Actions>
              <Action>增加</Action>
              <Action>插入</Action>
              <Action>删除</Action>
            </Actions>
          </Lower>
        </Work>
      </Body>

      <Status>
        <Grip $after={11} />
        <label htmlFor="norm">消耗量定额</label>
        <Combo>
          <Select id="norm">
            <option>广东省水利水电建筑工程概算定额(2017)</option>
          </Select>
          <SmallCaret />
        </Combo>
        <FlatButton $height={24} $pad={4}>
          项目指引
        </FlatButton>
        <Spacer />
        <SupportButton $height={19} $pad={9}>
          技术支持
        </SupportButton>
        <InputBar>
          <Badge>
            <Svg w={33} h={32} smooth>
              <rect x="2" y="2" width="28" height="28" rx="4" fill="#f4511e" transform="rotate(-10 16 16)" />
              <path
                d="M25 8c-6-2-15-2-16 3-1 6 15 3 14 8-1 5-11 4-16 1"
                stroke="#fff"
                strokeWidth="4"
                strokeLinecap="round"
              />
            </Svg>
          </Badge>
          <InputMode>中</InputMode>
          <Svg smooth>
            <circle cx="4" cy="5" r="2" stroke="#0a6fd8" strokeWidth="1.500" />
            <path d="M9 8h3v2l-2 4" stroke="#0a6fd8" strokeWidth="2" />
          </Svg>
          <Svg smooth>
            <rect x="5" y="0" width="6" height="10" rx="3" fill="#0a6fd8" />
            <path d="M3 6c0 8 10 8 10 0M8 12v4M5 15h6" stroke="#0a6fd8" strokeWidth="1.500" />
          </Svg>
          <Svg smooth>
            <rect x="1" y="2" width="14" height="12" rx="1" stroke="#0a6fd8" strokeWidth="2" />
            <path d="M3 5.500h10M3 8h10M5 11h6" stroke="#0a6fd8" strokeWidth="1.500" strokeDasharray="2 1" />
          </Svg>
          <Svg smooth>
            <path d="M5 1c1 2 5 2 6 0l5 3-2 4-2-1v8H4V7L2 8 0 4z" fill="#0a6fd8" />
          </Svg>
          <Svg smooth>
            <path d="M2 2h5v5H2zM2 9h5v5H2zM9 9h5v5H9z" fill="#0a6fd8" stroke="#0a6fd8" strokeLinejoin="round" />
            <circle cx="11.500" cy="4.500" r="2" stroke="#0a6fd8" strokeWidth="2" />
          </Svg>
        </InputBar>
      </Status>
      <TaskBar>
        <Running />
        <Clock>18:40</Clock>
      </TaskBar>
    </Window>
  );
}
